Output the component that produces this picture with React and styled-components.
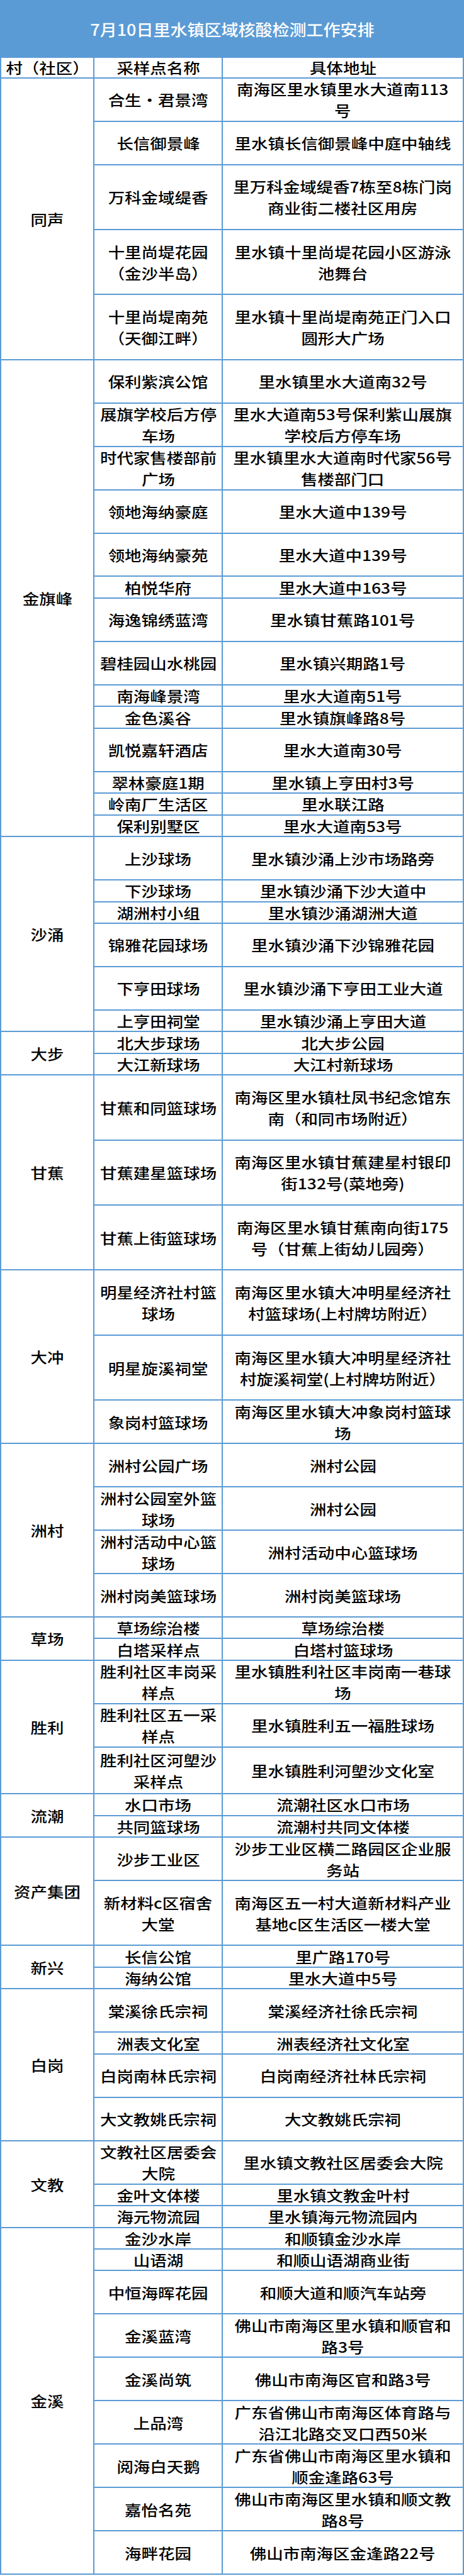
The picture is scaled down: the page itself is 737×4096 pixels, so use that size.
import styled, { createGlobalStyle } from 'styled-components';

const UNIT = 34.47; // hauteur d'une ligne simple du tableau
const BLUE = '#5b9bd5';

const villages = [
    { name: '同声', sites: [
        ['合生・君景湾', '南海区里水镇里水大道南113\n号', 2],
        ['长信御景峰', '里水镇长信御景峰中庭中轴线', 2],
        ['万科金域缇香', '里万科金域缇香7栋至8栋门岗\n商业街二楼社区用房', 3],
        ['十里尚堤花园\n（金沙半岛）', '里水镇十里尚堤花园小区游泳\n池舞台', 3],
        ['十里尚堤南苑\n（天御江畔）', '里水镇十里尚堤南苑正门入口\n圆形大广场', 3],
    ]},
    { name: '金旗峰', sites: [
        ['保利紫滨公馆', '里水镇里水大道南32号', 2],
        ['展旗学校后方停\n车场', '里水大道南53号保利紫山展旗\n学校后方停车场', 2],
        ['时代家售楼部前\n广场', '里水镇里水大道南时代家56号\n售楼部门口', 2],
        ['领地海纳豪庭', '里水大道中139号', 2],
        ['领地海纳豪苑', '里水大道中139号', 2],
        ['柏悦华府', '里水大道中163号', 1],
        ['海逸锦绣蓝湾', '里水镇甘蕉路101号', 2],
        ['碧桂园山水桃园', '里水镇兴期路1号', 2],
        ['南海峰景湾', '里水大道南51号', 1],
        ['金色溪谷', '里水镇旗峰路8号', 1],
        ['凯悦嘉轩酒店', '里水大道南30号', 2],
        ['翠林豪庭1期', '里水镇上亨田村3号', 1],
        ['岭南厂生活区', '里水联江路', 1],
        ['保利别墅区', '里水大道南53号', 1],
    ]},
    { name: '沙涌', sites: [
        ['上沙球场', '里水镇沙涌上沙市场路旁', 2],
        ['下沙球场', '里水镇沙涌下沙大道中', 1],
        ['湖洲村小组', '里水镇沙涌湖洲大道', 1],
        ['锦雅花园球场', '里水镇沙涌下沙锦雅花园', 2],
        ['下亨田球场', '里水镇沙涌下亨田工业大道', 2],
        ['上亨田祠堂', '里水镇沙涌上亨田大道', 1],
    ]},
    { name: '大步', sites: [
        ['北大步球场', '北大步公园', 1],
        ['大江新球场', '大江村新球场', 1],
    ]},
    { name: '甘蕉', sites: [
        ['甘蕉和同篮球场', '南海区里水镇杜凤书纪念馆东\n南（和同市场附近）', 3],
        ['甘蕉建星篮球场', '南海区里水镇甘蕉建星村银印\n街132号(菜地旁)', 3],
        ['甘蕉上街篮球场', '南海区里水镇甘蕉南向街175\n号（甘蕉上街幼儿园旁）', 3],
    ]},
    { name: '大冲', sites: [
        ['明星经济社村篮\n球场', '南海区里水镇大冲明星经济社\n村篮球场(上村牌坊附近）', 3],
        ['明星旋溪祠堂', '南海区里水镇大冲明星经济社\n村旋溪祠堂(上村牌坊附近）', 3],
        ['象岗村篮球场', '南海区里水镇大冲象岗村篮球\n场', 2],
    ]},
    { name: '洲村', sites: [
        ['洲村公园广场', '洲村公园', 2],
        ['洲村公园室外篮\n球场', '洲村公园', 2],
        ['洲村活动中心篮\n球场', '洲村活动中心篮球场', 2],
        ['洲村岗美篮球场', '洲村岗美篮球场', 2],
    ]},
    { name: '草场', sites: [
        ['草场综治楼', '草场综治楼', 1],
        ['白塔采样点', '白塔村篮球场', 1],
    ]},
    { name: '胜利', sites: [
        ['胜利社区丰岗采\n样点', '里水镇胜利社区丰岗南一巷球\n场', 2],
        ['胜利社区五一采\n样点', '里水镇胜利五一福胜球场', 2],
        ['胜利社区河塱沙\n采样点', '里水镇胜利河塱沙文化室', 2.157],
    ]},
    { name: '流潮', sites: [
        ['水口市场', '流潮社区水口市场', 1],
        ['共同篮球场', '流潮村共同文体楼', 1],
    ]},
    { name: '资产集团', sites: [
        ['沙步工业区', '沙步工业区横二路园区企业服\n务站', 2],
        ['新材料c区宿舍\n大堂', '南海区五一村大道新材料产业\n基地c区生活区一楼大堂', 3],
    ]},
    { name: '新兴', sites: [
        ['长信公馆', '里广路170号', 1],
        ['海纳公馆', '里水大道中5号', 1],
    ]},
    { name: '白岗', sites: [
        ['棠溪徐氏宗祠', '棠溪经济社徐氏宗祠', 2],
        ['洲表文化室', '洲表经济社文化室', 1],
        ['白岗南林氏宗祠', '白岗南经济社林氏宗祠', 2],
        ['大文教姚氏宗祠', '大文教姚氏宗祠', 2],
    ]},
    { name: '文教', sites: [
        ['文教社区居委会\n大院', '里水镇文教社区居委会大院', 2],
        ['金叶文体楼', '里水镇文教金叶村', 1],
        ['海元物流园', '里水镇海元物流园内', 1],
    ]},
    { name: '金溪', sites: [
        ['金沙水岸', '和顺镇金沙水岸', 1],
        ['山语湖', '和顺山语湖商业街', 1],
        ['中恒海晖花园', '和顺大道和顺汽车站旁', 2],
        ['金溪蓝湾', '佛山市南海区里水镇和顺官和\n路3号', 2],
        ['金溪尚筑', '佛山市南海区官和路3号', 2],
        ['上品湾', '广东省佛山市南海区体育路与\n沿江北路交叉口西50米', 2],
        ['阅海白天鹅', '广东省佛山市南海区里水镇和\n顺金逢路63号', 2],
        ['嘉怡名苑', '佛山市南海区里水镇和顺文教\n路8号', 2],
        ['海畔花园', '佛山市南海区金逢路22号', 2],
    ]},
]

function App() {
    return (
        <>
            <GlobalStyle />
            <Sheet>
                <Title><Txt $title>7月10日里水镇区域核酸检测工作安排</Txt></Title>
                <Grid>
                    <HeaderRow>
                        <VillageCell><Txt>村（社区）</Txt></VillageCell>
                        <NameCell><Txt>采样点名称</Txt></NameCell>
                        <AddrCell><Txt>具体地址</Txt></AddrCell>
                    </HeaderRow>
                    {villages.map((v) => (
                        <Group key={v.name}>
                            <VillageCell><Txt>{v.name}</Txt></VillageCell>
                            <Sites>
                                {v.sites.map(([site, addr, units]) => (
                                    <SiteRow key={site} $units={units}>
                                        <NameCell><Txt>{site}</Txt></NameCell>
                                        <AddrCell><Txt>{addr}</Txt></AddrCell>
                                    </SiteRow>
                                ))}
                            </Sites>
                        </Group>
                    ))}
                </Grid>
            </Sheet>
        </>
    )
}

export default App

const GlobalStyle = createGlobalStyle`
    * { box-sizing:border-box; }
    body {
        margin:0;
        background:#fff;
        font-family:"Noto Sans CJK SC", "Noto Sans", sans-serif;
        color:#000;
    }
`
const Sheet = styled.div`
    width:737px;
    display:flex;
    flex-direction:column;
`
const Title = styled.div`
    height:92px;
    background:${BLUE};
    color:#fff;
    display:flex;
    align-items:center;
    justify-content:center;
`
const Txt = styled.span`
    display:inline-block;
    white-space:pre;
    text-align:center;
    font-weight:500;
    font-size:${props => props.$title ? '25px' : '23px'};
    line-height:34px;
    transform:scaleX(${props => props.$title ? 1.08 : 1.15});
`
const Grid = styled.div`
    display:flex;
    flex-direction:column;
    border-left:2px solid ${BLUE};
    border-right:2px solid ${BLUE};
`
const Cell = styled.div`
    display:flex;
    align-items:center;
    justify-content:center;
    border-bottom:2px solid ${BLUE};
`
const VillageCell = styled(Cell)`
    width:148px;
    flex:none;
    border-right:2px solid ${BLUE};
`
const NameCell = styled(Cell)`
    width:204px;
    flex:none;
    border-right:2px solid ${BLUE};
`
const AddrCell = styled(Cell)`
    flex:1;
`
const HeaderRow = styled.div`
    display:flex;
    height:32.7px;
`
const Group = styled.div`
    display:flex;
`
const Sites = styled.div`
    flex:1;
    display:flex;
    flex-direction:column;
`
const SiteRow = styled.div`
    display:flex;
    height:${props => props.$units * UNIT}px;
    & > div { height:100%; }
`
